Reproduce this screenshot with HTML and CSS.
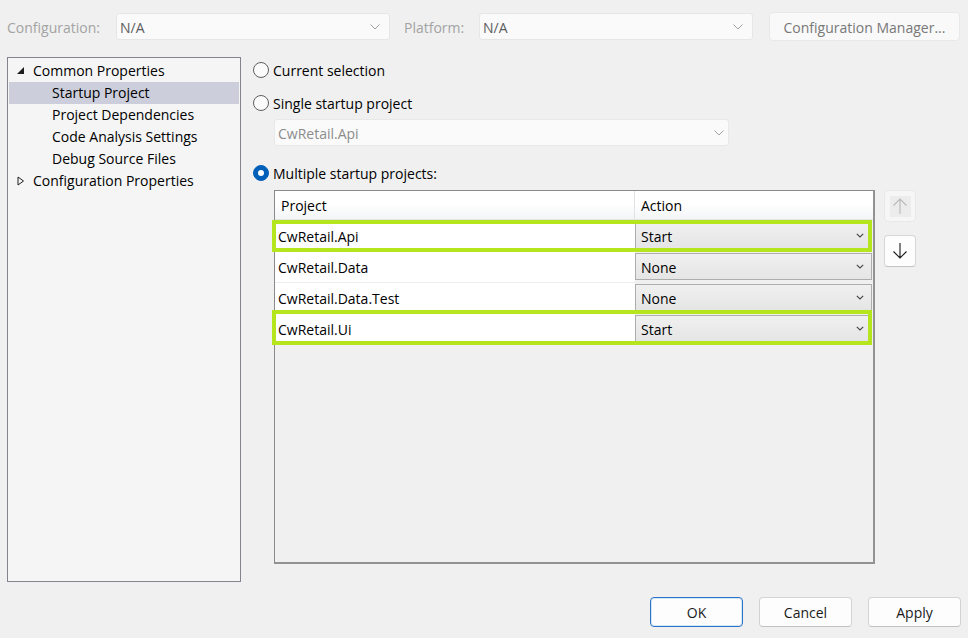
FILE: index.html
```html
<!DOCTYPE html>
<html>
<head>
<meta charset="utf-8">
<link rel="stylesheet" href="styles.css">
</head>
<body>
<div class="window">
  <div class="topbar">
    <span class="lbl lbl-config">Configuration:</span>
    <div class="combo combo-top"><span class="combo-text">N/A</span><svg class="chev" width="10" height="6" viewBox="0 0 10 6"><polyline points="0.5,0.5 5,5 9.5,0.5" fill="none" stroke="#a2a2a2" stroke-width="1"/></svg></div>
    <span class="lbl lbl-plat">Platform:</span>
    <div class="combo combo-top"><span class="combo-text">N/A</span><svg class="chev" width="10" height="6" viewBox="0 0 10 6"><polyline points="0.5,0.5 5,5 9.5,0.5" fill="none" stroke="#a2a2a2" stroke-width="1"/></svg></div>
    <button class="btn btn-cfg">Configuration Manager...</button>
  </div>

  <div class="main">
    <div class="tree">
      <div class="node top">
        <svg class="tri" width="8" height="8" viewBox="0 0 8 8"><polygon points="7,0 7,7 0,7" fill="#1e1e1e"/></svg>
        <span>Common Properties</span>
      </div>
      <div class="node child selected"><span>Startup Project</span></div>
      <div class="node child"><span>Project Dependencies</span></div>
      <div class="node child"><span>Code Analysis Settings</span></div>
      <div class="node child"><span>Debug Source Files</span></div>
      <div class="node top">
        <svg class="tri" width="8" height="10" viewBox="0 0 8 10"><polygon points="1,1 6.5,5 1,9" fill="none" stroke="#1e1e1e" stroke-width="1"/></svg>
        <span>Configuration Properties</span>
      </div>
    </div>

    <div class="content">
      <label class="radio r1"><span class="dot"></span><span class="rtext">Current selection</span></label>
      <label class="radio r2"><span class="dot"></span><span class="rtext">Single startup project</span></label>
      <div class="combo combo-single"><span class="combo-text">CwRetail.Api</span><svg class="chev" width="10" height="6" viewBox="0 0 10 6"><polyline points="0.5,0.5 5,5 9.5,0.5" fill="none" stroke="#a2a2a2" stroke-width="1"/></svg></div>
      <label class="radio r3"><span class="dot on"></span><span class="rtext">Multiple startup projects:</span></label>

      <div class="grid-area">
        <div class="grid">
          <div class="grid-head">
            <div class="hcell hproj">Project</div>
            <div class="hcell hact">Action</div>
          </div>
          <div class="grid-body">
            <div class="grow">
              <div class="pcell">CwRetail.Api</div>
              <div class="acell"><div class="acombo"><span>Start</span><svg width="8" height="5" viewBox="0 0 8 5"><polyline points="0.8,0.8 4,4 7.2,0.8" fill="none" stroke="#444" stroke-width="1.1"/></svg></div></div>
              <div class="hl hl1"></div>
            </div>
            <div class="grow">
              <div class="pcell">CwRetail.Data</div>
              <div class="acell"><div class="acombo"><span>None</span><svg width="8" height="5" viewBox="0 0 8 5"><polyline points="0.8,0.8 4,4 7.2,0.8" fill="none" stroke="#444" stroke-width="1.1"/></svg></div></div>
            </div>
            <div class="grow">
              <div class="pcell">CwRetail.Data.Test</div>
              <div class="acell"><div class="acombo"><span>None</span><svg width="8" height="5" viewBox="0 0 8 5"><polyline points="0.8,0.8 4,4 7.2,0.8" fill="none" stroke="#444" stroke-width="1.1"/></svg></div></div>
            </div>
            <div class="grow">
              <div class="pcell">CwRetail.Ui</div>
              <div class="acell"><div class="acombo"><span>Start</span><svg width="8" height="5" viewBox="0 0 8 5"><polyline points="0.8,0.8 4,4 7.2,0.8" fill="none" stroke="#444" stroke-width="1.1"/></svg></div></div>
              <div class="hl hl4"></div>
            </div>
          </div>
        </div>
        <div class="side">
          <div class="mv mv-up">
            <div class="mv-inner">
              <svg width="16" height="18" viewBox="0 0 16 18"><path d="M8 2 V17 M1.5 8.5 L8 2 L14.5 8.5" fill="none" stroke="#b8b8b8" stroke-width="1.1"/></svg>
            </div>
          </div>
          <div class="mv mv-down">
            <svg width="16" height="18" viewBox="0 0 16 18"><path d="M8 1 V16 M1.5 9.5 L8 16 L14.5 9.5" fill="none" stroke="#1a1a1a" stroke-width="1.1"/></svg>
          </div>
        </div>
      </div>
    </div>
  </div>

  <div class="footer">
    <button class="btn fbtn ok">OK</button>
    <button class="btn fbtn">Cancel</button>
    <button class="btn fbtn">Apply</button>
  </div>
</div>
</body>
</html>
```

FILE: styles.css
```css
* { box-sizing: border-box; }

body {
  margin: 0;
  background: #f0f0f0;
  font-family: "Open Sans", "Noto Sans", sans-serif;
  font-size: 14px;
  color: #000;
}

.window {
  width: 968px;
  height: 638px;
  overflow: hidden;
  display: flex;
  flex-direction: column;
}

/* top bar */
.topbar {
  display: flex;
  align-items: center;
  padding: 12px 0 0 7px;
  height: 41px;
}
.lbl { color: #a3a3a3; padding-top: 2px; }
.lbl-config { width: 109px; }
.lbl-plat { width: 75px; margin-left: 14px; }

.combo {
  display: flex;
  align-items: center;
  justify-content: space-between;
  background: #fafafa;
  border: 1px solid #e6e6e6;
  border-radius: 3px;
}
.combo-text { padding-top: 2px; }
.combo-top {
  width: 274px;
  height: 27px;
  padding: 0 9px 0 3px;
}
.combo-top .combo-text { color: #5d5d5d; }
.btn {
  font-family: inherit;
  font-size: 14px;
  background: #fdfdfd;
  border: 1px solid #e0e0e0;
  border-radius: 4px;
  padding: 0;
}
.btn-cfg {
  margin-left: 16px;
  width: 191px;
  height: 29px;
  padding-top: 1px;
  color: #787878;
  background: #f9f9f9;
  border-color: #e8e8e8;
}

/* main */
.main {
  display: flex;
  padding-left: 7px;
  margin-top: 16px;
}
.tree {
  width: 234px;
  height: 525px;
  border: 1px solid #84848c;
  background: #f5f5f5;
  padding: 2px 1px 0;
}
.node {
  height: 22px;
  display: flex;
  align-items: center;
  line-height: 22px;
  white-space: nowrap;
}
.node.top { padding-left: 8px; }
.node.top .tri { margin-right: 8px; }
.node.child { padding-left: 43px; }
.node.selected { background: #cccedb; }

.content {
  margin-left: 11px;
  display: flex;
  flex-direction: column;
}
.radio {
  display: flex;
  align-items: center;
  height: 20px;
  gap: 4px;
  white-space: nowrap;
}
.rtext { padding-top: 1px; }
.r1 { margin-top: 3px; }
.r2 { margin-top: 13px; }
.r3 { margin-top: 17px; }
.dot {
  width: 16px;
  height: 16px;
  margin-left: 1px;
  border-radius: 50%;
  border: 1px solid #5f5f5f;
  background: #fbfbfb;
  display: flex;
  align-items: center;
  justify-content: center;
}
.dot.on {
  background: #005fb8;
  border-color: #005fb8;
}
.dot.on::after {
  content: "";
  width: 6px;
  height: 6px;
  border-radius: 50%;
  background: #fff;
}

.combo-single {
  margin: 6px 0 0 22px;
  width: 455px;
  height: 27px;
  padding: 0 4px 0 3px;
  border-color: #e8e8e8;
}
.combo-single .combo-text { color: #8c8c8c; }

/* grid */
.grid-area {
  display: flex;
  margin: 7px 0 0 22px;
}
.grid {
  width: 601px;
  height: 374px;
  border: 1px solid #8a8a8a;
  border-right-width: 2px;
  border-bottom-width: 2px;
  border-right-color: #929292;
  border-bottom-color: #929292;
  background: #f0f0f0;
}
.grid-head {
  display: flex;
  height: 29px;
  background: linear-gradient(#ffffff, #ffffff 45%, #f4f5f7);
  border-bottom: 1px solid #e3e3e3;
}
.hcell {
  line-height: 27px;
  padding: 1px 0 0 6px;
}
.hproj {
  width: 360px;
  border-right: 1px solid #e2e2e2;
}
.hact { flex: 1; }

.grid-body { margin-top: 1px; }
.grow {
  position: relative;
  display: flex;
  height: 31px;
}
.pcell {
  width: 360px;
  background: #fff;
  border-bottom: 1px solid #ededed;
  padding: 2px 0 0 3px;
  line-height: 28px;
}
.acell {
  flex: 1;
  padding: 1px 1px 0 0;
}
.acombo {
  height: 27px;
  border: 1px solid #adadad;
  background: linear-gradient(#f0f0f0, #e5e5e5);
  display: flex;
  align-items: center;
  justify-content: space-between;
  padding: 0 7px 0 5px;
}
.acombo span { padding-top: 2px; }
.hl {
  position: absolute;
  left: -3px;
  width: 600px;
  border: 4px solid #b5e61d;
  pointer-events: none;
}
.hl1 { top: -1px; height: 32px; }
.hl4 { top: -4px; height: 35px; }

.side {
  margin-left: 9px;
  display: flex;
  flex-direction: column;
}
.mv {
  width: 32px;
  height: 32px;
  border-radius: 4px;
  display: flex;
  align-items: center;
  justify-content: center;
}
.mv-up {
  background: #f6f6f6;
  border: 1px solid #e9e9e9;
}
.mv-inner {
  width: 21px;
  height: 21px;
  background: #ececec;
  display: flex;
  align-items: center;
  justify-content: center;
}
.mv-down {
  margin-top: 13px;
  background: #fdfdfd;
  border: 1px solid #d6d6d6;
  border-bottom-color: #c4c4c4;
}

/* footer */
.footer {
  display: flex;
  justify-content: flex-end;
  gap: 16px;
  padding-right: 7px;
  margin-top: 15px;
}
.fbtn {
  width: 93px;
  height: 30px;
  padding-top: 1px;
  color: #1a1a1a;
  border-color: #d3d3d3;
  border-bottom-color: #c2c2c2;
}
.fbtn.ok {
  border: 1px solid #2a74c4;
  box-shadow: inset 0 0 0 1px #d6e6f6;
}
```
